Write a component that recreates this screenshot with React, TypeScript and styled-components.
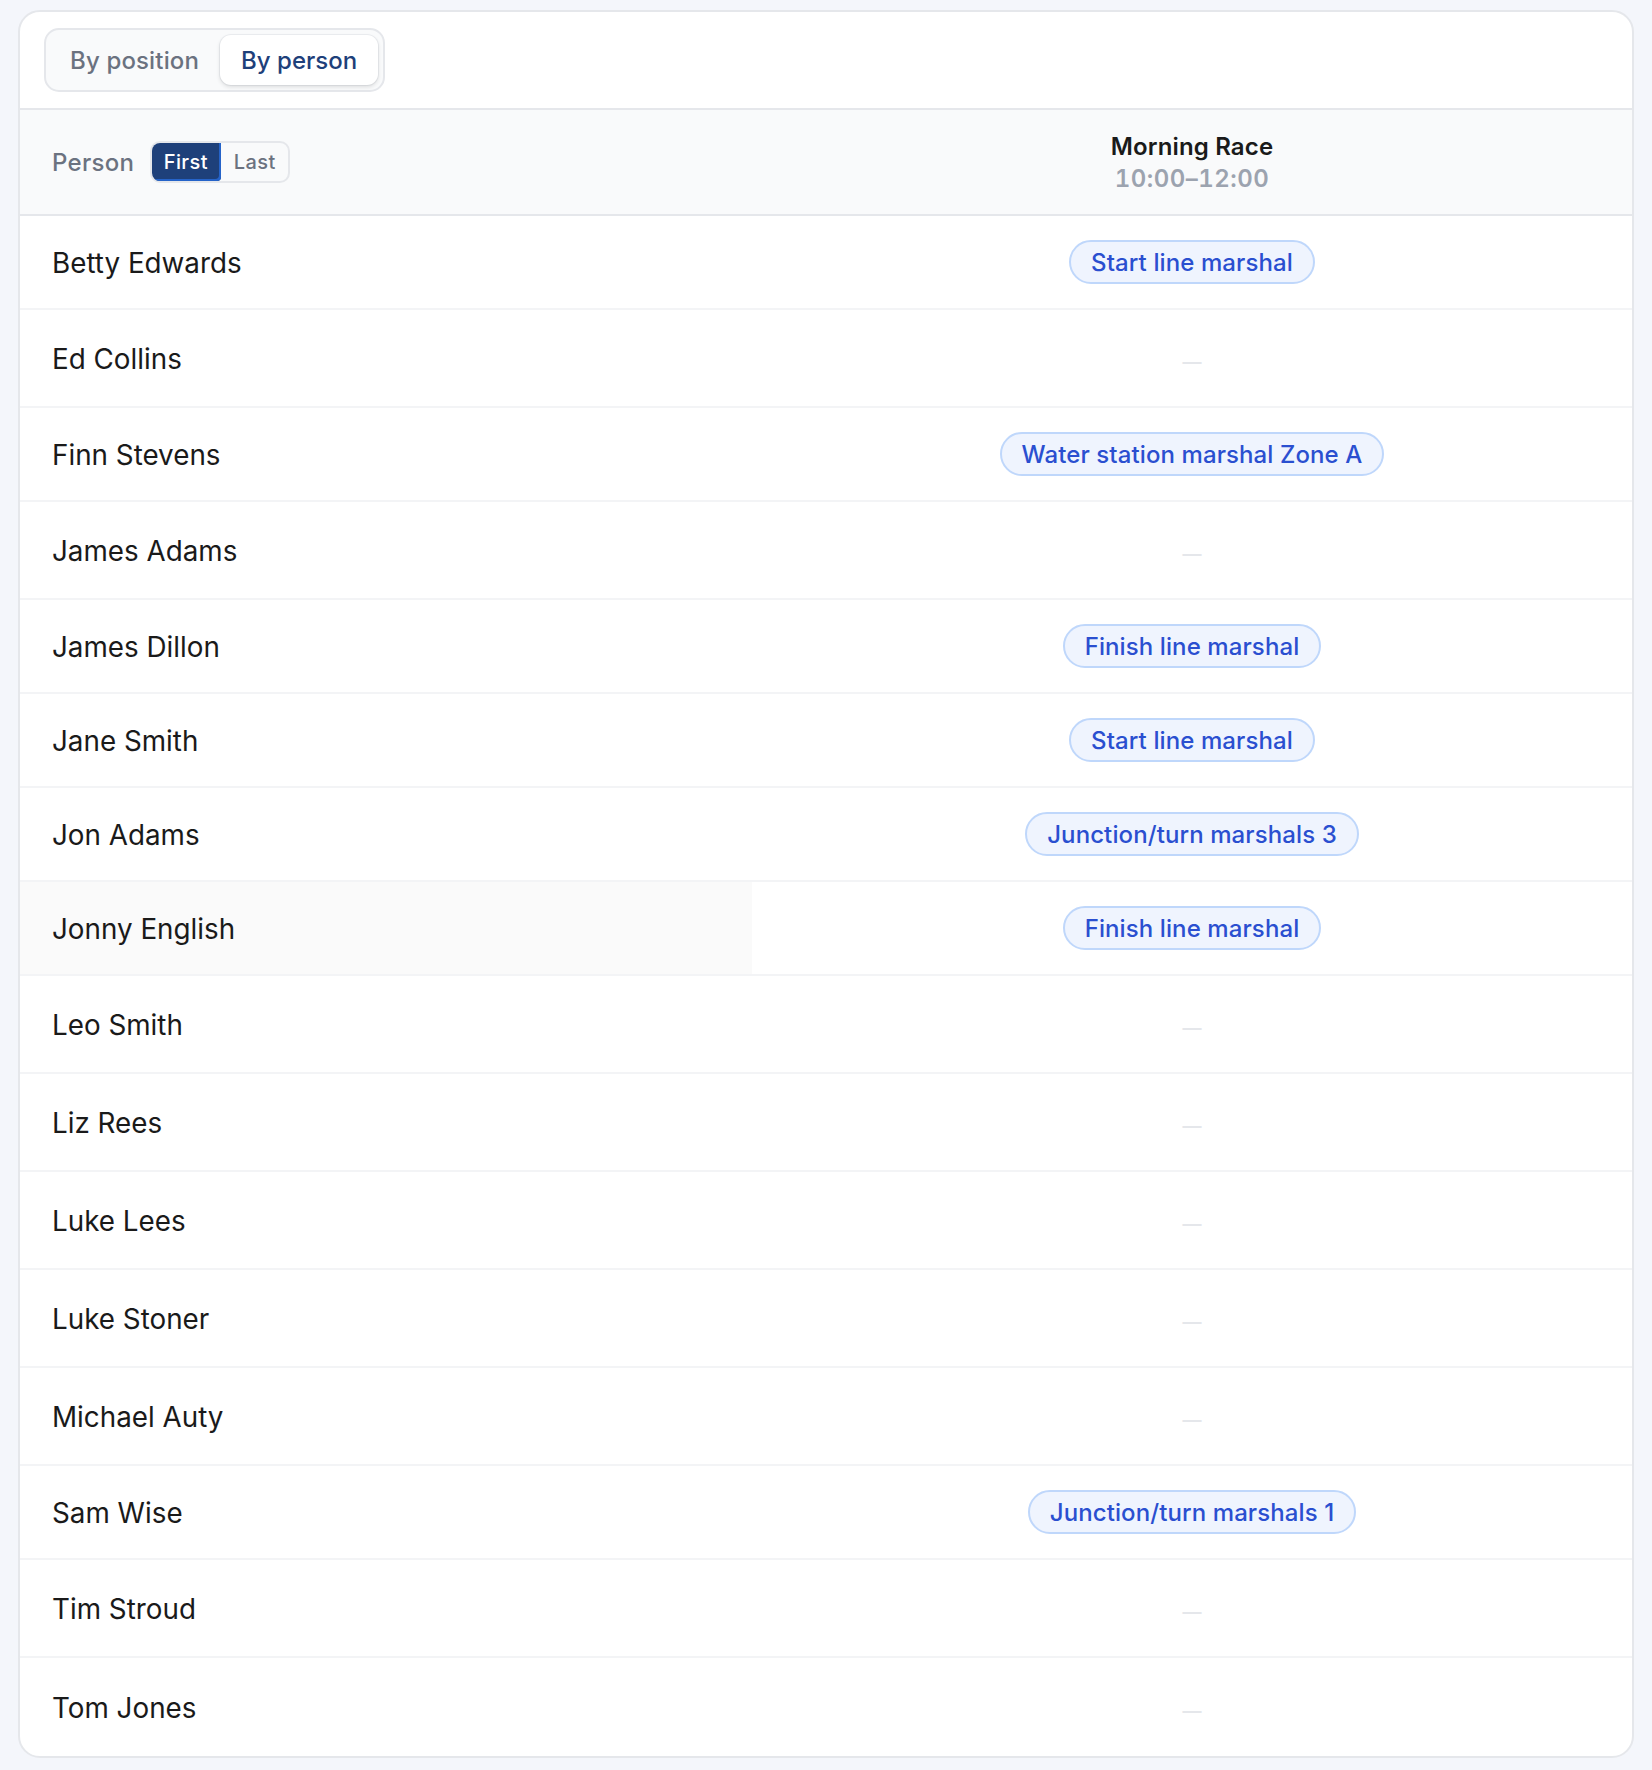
import { useState } from "react";
import styled, { createGlobalStyle } from "styled-components";

const GlobalStyle = createGlobalStyle`
  html, body {
    margin: 0;
    padding: 0;
    background: #f4f6fb;
    font-family: Inter, "Liberation Sans", sans-serif;
    -webkit-font-smoothing: antialiased;
  }
`;

interface Person {
  name: string;
  position?: string;
  hovered?: boolean;
}

const people: Person[] = [
  { name: "Betty Edwards", position: "Start line marshal" },
  { name: "Ed Collins" },
  { name: "Finn Stevens", position: "Water station marshal Zone A" },
  { name: "James Adams" },
  { name: "James Dillon", position: "Finish line marshal" },
  { name: "Jane Smith", position: "Start line marshal" },
  { name: "Jon Adams", position: "Junction/turn marshals 3" },
  { name: "Jonny English", position: "Finish line marshal", hovered: true },
  { name: "Leo Smith" },
  { name: "Liz Rees" },
  { name: "Luke Lees" },
  { name: "Luke Stoner" },
  { name: "Michael Auty" },
  { name: "Sam Wise", position: "Junction/turn marshals 1" },
  { name: "Tim Stroud" },
  { name: "Tom Jones" },
];

const App = () => {
  const [view, setView] = useState("person");
  const [sort, setSort] = useState("first");

  return (
    <Page>
      <GlobalStyle />
      <Card>
        <Toolbar>
          <Segmented>
            <SegmentButton $active={view === "position"} onClick={() => setView("position")}>
              By position
            </SegmentButton>
            <SegmentButton $active={view === "person"} onClick={() => setView("person")}>
              By person
            </SegmentButton>
          </Segmented>
        </Toolbar>
        <HeaderRow>
          <PersonHead>
            <PersonLabel>Person</PersonLabel>
            <SortToggle>
              <SortButton $active={sort === "first"} onClick={() => setSort("first")}>
                First
              </SortButton>
              <SortButton $active={sort === "last"} onClick={() => setSort("last")}>
                Last
              </SortButton>
            </SortToggle>
          </PersonHead>
          <SessionHead>
            <SessionName>Morning Race</SessionName>
            <SessionTime>10:00–12:00</SessionTime>
          </SessionHead>
        </HeaderRow>
        {people.map((person) => (
          <Row key={person.name} $tall={!person.position}>
            <NameCell $hovered={person.hovered}>{person.name}</NameCell>
            <PositionCell>
              {person.position ? <Pill>{person.position}</Pill> : <Empty>—</Empty>}
            </PositionCell>
          </Row>
        ))}
      </Card>
    </Page>
  );
};

export default App;

const Page = styled.div`
  padding: 10px 18px 12px 18px;
`;

const Card = styled.div`
  background: #fff;
  border: 2px solid #e5e7eb;
  border-radius: 22px;
  overflow: hidden;
`;

const Toolbar = styled.div`
  display: flex;
  height: 98px;
  padding: 16px 24px;
  box-sizing: border-box;
  border-bottom: 2px solid #e5e7eb;
`;

const Segmented = styled.div`
  display: flex;
  align-items: center;
  height: 64px;
  box-sizing: border-box;
  padding: 0 5px 0 3px;
  background: #f9fafb;
  border: 2px solid #e5e7eb;
  border-radius: 15px;
`;

const SegmentButton = styled.button<{ $active?: boolean }>`
  height: 50px;
  padding: 0 21px;
  border: none;
  border-radius: 11px;
  font: 500 24px Inter, sans-serif;
  letter-spacing: ${(p) => (p.$active ? "0" : "0.15px")};
  color: ${(p) => (p.$active ? "#1e407a" : "#6b7280")};
  background: ${(p) => (p.$active ? "#fff" : "transparent")};
  box-shadow: ${(p) => (p.$active ? "0 2px 4px rgba(0, 0, 0, 0.12), 0 0 0 1px #eceef1" : "none")};
`;

const HeaderRow = styled.div`
  display: flex;
  height: 106px;
  box-sizing: border-box;
  background: #f9fafb;
  border-bottom: 2px solid #e5e7eb;
`;

const PersonHead = styled.div`
  display: flex;
  align-items: center;
  gap: 16px;
  width: 732px;
  box-sizing: border-box;
  padding-left: 32px;
`;

const PersonLabel = styled.span`
  font-weight: 500;
  font-size: 24px;
  letter-spacing: 0.3px;
  color: #6b7280;
`;

const SortToggle = styled.div`
  display: flex;
  height: 42px;
  box-sizing: border-box;
  border: 2px solid #e5e7eb;
  border-radius: 10px;
  overflow: hidden;
`;

const SortButton = styled.button<{ $active?: boolean }>`
  width: ${(p) => (p.$active ? "69px" : "67px")};
  padding: ${(p) => (p.$active ? "0 2px 0 0" : "0")};
  box-sizing: border-box;
  border: none;
  border-radius: ${(p) => (p.$active ? "0 0 4px 0" : "0")};
  font: 500 20px Inter, sans-serif;
  letter-spacing: 0.4px;
  color: ${(p) => (p.$active ? "#fff" : "#6b7280")};
  background: ${(p) => (p.$active ? "#1e407a" : "transparent")};
  box-shadow: ${(p) => (p.$active ? "inset -2px -2px 0 #2563c9" : "none")};
`;

const SessionHead = styled.div`
  flex: 1;
  display: flex;
  flex-direction: column;
  align-items: center;
  justify-content: center;
  padding-top: 2px;
`;

const SessionName = styled.div`
  font-weight: 600;
  font-size: 24px;
  letter-spacing: 0.15px;
  line-height: 32px;
  color: #1a1a1a;
`;

const SessionTime = styled.div`
  font-weight: 600;
  font-size: 24px;
  letter-spacing: 0.5px;
  line-height: 32px;
  font-variant-numeric: tabular-nums;
  color: #9ca3af;
`;

const Row = styled.div<{ $tall?: boolean }>`
  display: flex;
  height: ${(p) => (p.$tall ? "98px" : "94px")};
  box-sizing: border-box;
  border-bottom: 2px solid #f3f4f6;

  &:last-child {
    border-bottom: none;
  }
`;

const NameCell = styled.div<{ $hovered?: boolean }>`
  display: flex;
  align-items: center;
  width: 732px;
  box-sizing: border-box;
  padding: 2px 0 0 32px;
  font-size: 27.8px;
  color: #1a1a1a;
  background: ${(p) => (p.$hovered ? "#fafafa" : "transparent")};
`;

const PositionCell = styled.div`
  flex: 1;
  display: flex;
  align-items: center;
  justify-content: center;
`;

const Pill = styled.span`
  display: inline-flex;
  align-items: center;
  height: 44px;
  box-sizing: border-box;
  padding: 0 20px;
  background: #eff4fe;
  border: 2px solid #bfd7fb;
  border-radius: 22px;
  font-weight: 500;
  font-size: 24px;
  letter-spacing: 0.1px;
  color: #2a4fd0;
`;

const Empty = styled.span`
  margin-top: 8px;
  font-size: 19px;
  font-weight: 600;
  color: #e5e7eb;
`;
